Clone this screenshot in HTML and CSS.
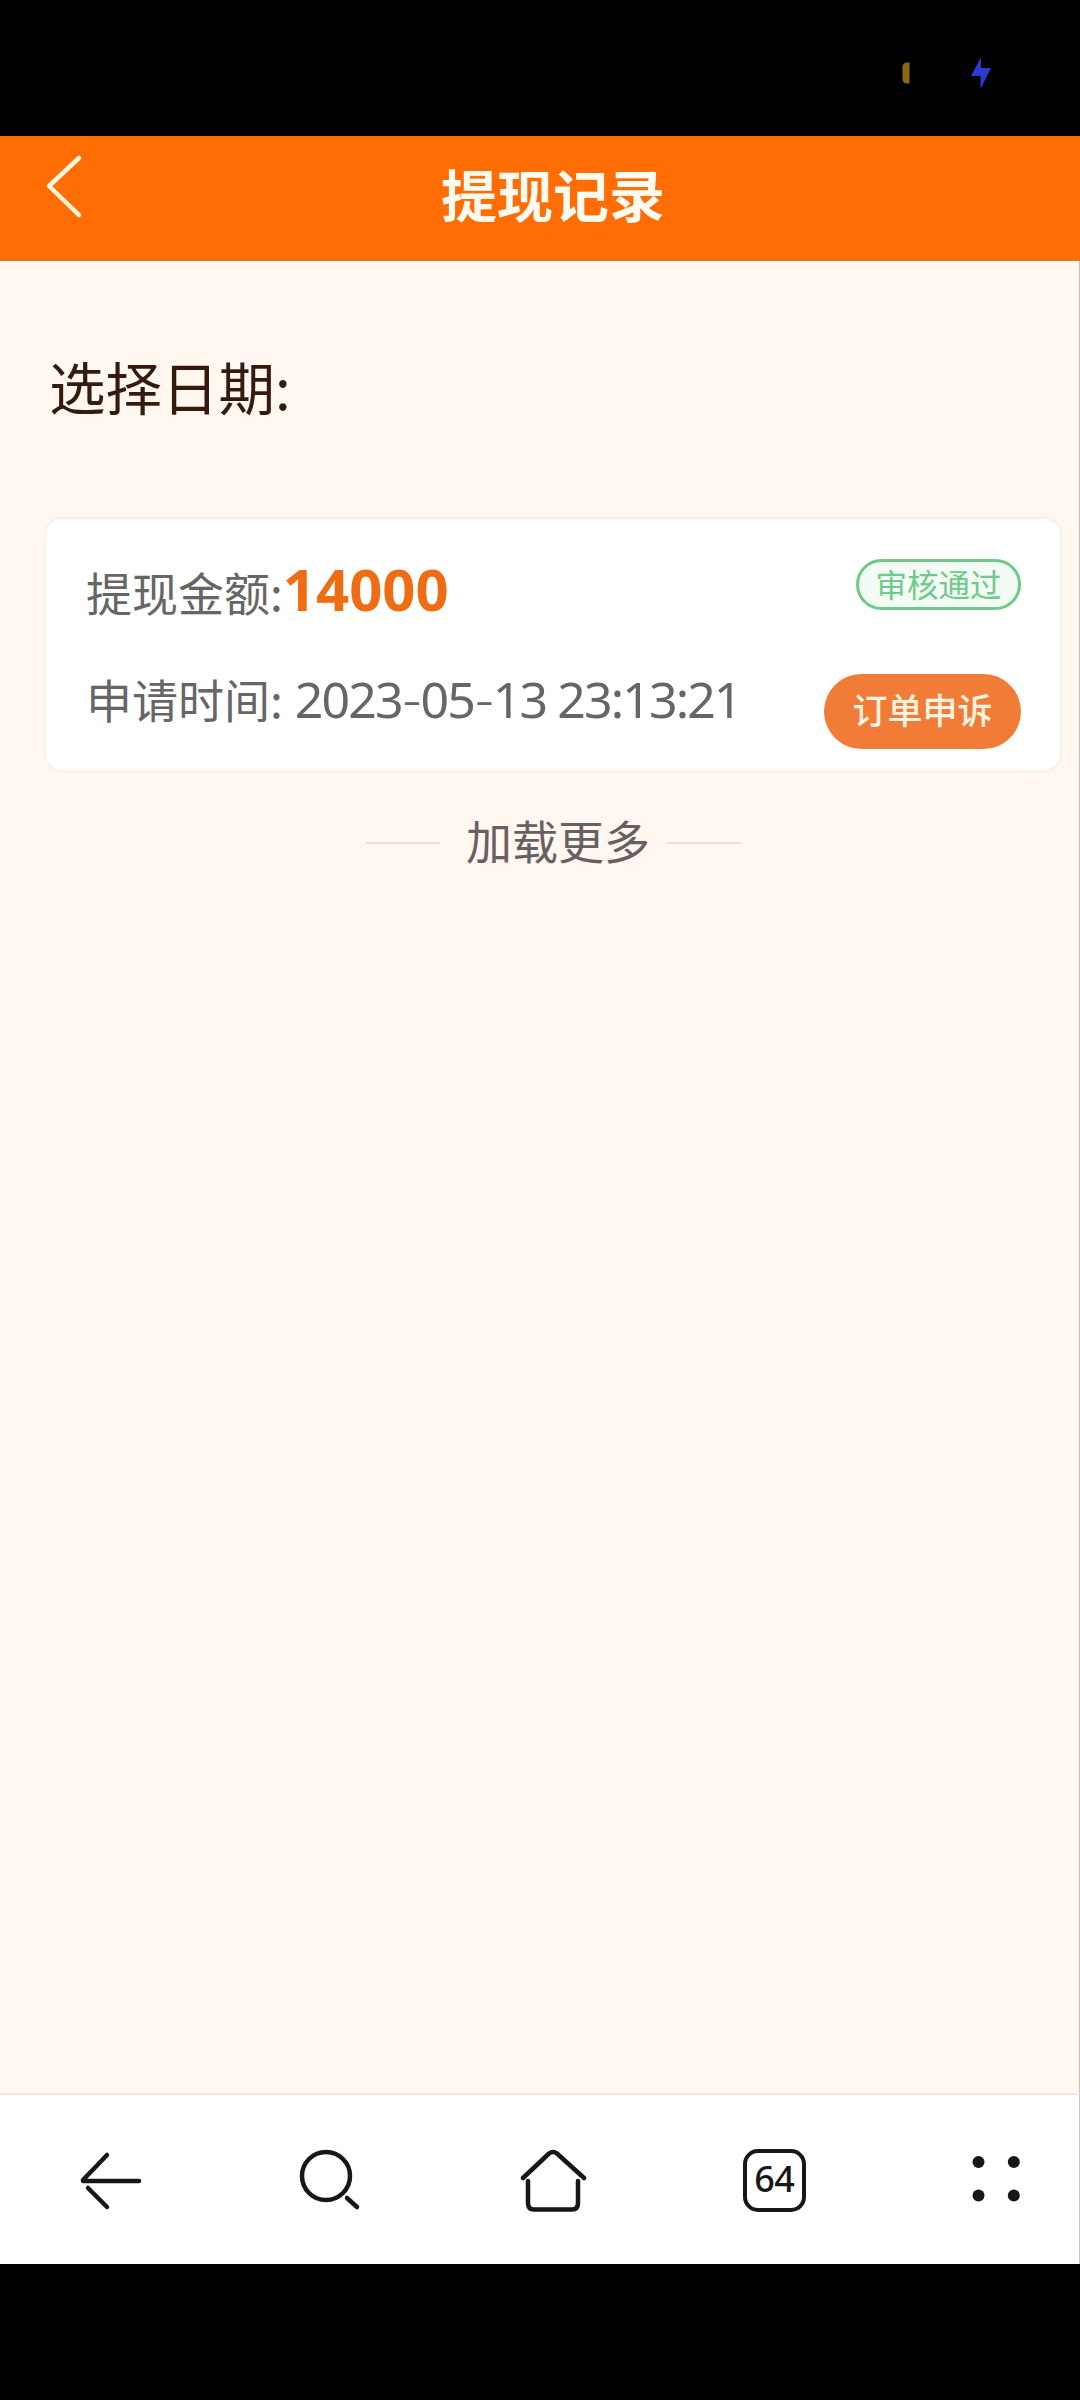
FILE: index.html
```html
<!DOCTYPE html>
<html lang="zh-CN">
<head>
<meta charset="utf-8">
<title>提现记录</title>
<link rel="stylesheet" href="styles.css">
</head>
<body>
<div class="screen">
  <div class="status">
    <svg class="battery" width="8" height="22" viewBox="0 0 8 22"><path d="M7.500 .5H4Q.5 1.500 .5 5V17Q.5 20.500 4 21.500H7.500Z" fill="#8b6914"/></svg>
    <svg class="bolt" width="20" height="32" viewBox="0 0 20 32"><path d="M10 0L0 19H9.500V32L20 11H10Z" fill="#2b3bd0"/></svg>
  </div>
  <header class="header">
    <svg class="back" width="40" height="66" viewBox="0 0 40 66"><path d="M35 5L5 33L35 62" fill="none" stroke="#fff6e0" stroke-width="4.500" stroke-linecap="round" stroke-linejoin="round"/></svg>
    <h1 class="title">提现记录</h1>
  </header>
  <main class="content">
    <div class="date-label">选择日期:</div>
    <section class="card">
      <div class="row">
        <div class="field">提现金额:<span class="amount">14000</span></div>
        <span class="badge">审核通过</span>
      </div>
      <div class="row row-time">
        <div class="field">申请时间:<span class="time">2023<span class="dash">-</span>05<span class="dash">-</span>13 23:13:21</span></div>
        <button class="appeal">订单申诉</button>
      </div>
    </section>
    <div class="more"><i class="rule"></i><span>加载更多</span><i class="rule"></i></div>
  </main>
  <nav class="nav">
    <svg width="64" height="64" viewBox="0 0 64 64" fill="none" stroke="#171717" stroke-width="4.500" stroke-linecap="round"><path d="M5 32H61M5 31L29 6M10 39L29 58"/></svg>
    <svg width="64" height="64" viewBox="0 0 64 64" fill="none" stroke="#171717" stroke-width="4.500" stroke-linecap="round"><circle cx="28" cy="27" r="24"/><path d="M49 49L59 58"/></svg>
    <svg width="68" height="64" viewBox="0 0 68 64" fill="none" stroke="#171717" stroke-width="4.500" stroke-linecap="round" stroke-linejoin="round"><path d="M4 29L30 4.500Q34 1.500 38 4.500L65 29M9 32V54Q9 60.500 15 60.500H53Q59 60.500 59 54V32"/></svg>
    <div class="tabs">64</div>
    <svg width="64" height="64" viewBox="0 0 64 64" fill="#171717"><circle cx="16.500" cy="13" r="6"/><circle cx="51.800" cy="13" r="6"/><circle cx="16.500" cy="46.500" r="6"/><circle cx="51.800" cy="46.500" r="6"/></svg>
  </nav>
</div>
</body>
</html>
```
FILE: styles.css
```css
* { box-sizing: border-box; }

body {
  margin: 0;
  background: #000;
  font-family: "Noto Sans CJK SC", sans-serif;
}

.screen {
  width: 1080px;
  height: 2400px;
  display: flex;
  flex-direction: column;
  background: #000;
}

.status {
  height: 136px;
  padding: 57px 89px 0 0;
  display: flex;
  justify-content: flex-end;
  gap: 61px;
}

.battery { margin-top: 5px; }

.header {
  height: 125px;
  display: grid;
  grid-template-columns: 90px 1fr 90px;
  background: #ff6d04;
  border-bottom: 1px solid #e07321;
}

.back { margin: 17px 0 0 44px; }

.title {
  margin: 0;
  padding: 17px 0 0 26px;
  text-align: center;
  font-size: 56px;
  line-height: 80px;
  font-weight: 700;
  color: #fffaf0;
}

.content {
  height: 1832px;
  padding: 84px 17px 0 44px;
  background: #fff7f0;
  border-right: 1px solid #c4c0bc;
}

.date-label {
  padding-left: 5px;
  font-size: 56.5px;
  line-height: 80px;
  color: #351a0e;
}

.card {
  height: 255px;
  margin-top: 92px;
  padding: 25px 39px 0 40px;
  background: #fff;
  border: 2px solid #f6f2ea;
  border-radius: 18px;
}

.row {
  height: 104px;
  display: flex;
  justify-content: space-between;
  align-items: flex-start;
}

.field {
  display: flex;
  align-items: baseline;
  font-size: 46px;
  line-height: 100px;
  color: #666;
  white-space: nowrap;
}

.row .field { margin-top: -3px; }
.row-time .field { margin-top: 0; }

.amount {
  font-family: "Noto Sans", sans-serif;
  font-size: 58px;
  line-height: 80px;
  font-weight: 700;
  color: #ee6d13;
}

.time {
  margin-left: 12px;
  font-family: "Noto Sans", sans-serif;
  font-size: 50px;
  line-height: 80px;
  letter-spacing: -1.9px;
}

.dash {
  font-family: Inter, sans-serif;
  font-size: 46px;
  font-weight: 300;
}

.badge {
  width: 165px;
  height: 51px;
  margin-top: 15px;
  border: 3px solid #6fca8a;
  border-radius: 26px;
  background: #f3fbf5;
  font-size: 31.5px;
  line-height: 42px;
  text-align: center;
  color: #6fca8a;
}

.appeal {
  width: 197px;
  height: 75px;
  margin-top: 26px;
  padding: 0 0 6px;
  border: 0;
  border-radius: 38px;
  background: #f07c38;
  font: 500 35px "Noto Sans CJK SC", sans-serif;
  color: #fff3e2;
}

.more {
  margin: 31px 0 0 322px;
  display: flex;
  align-items: center;
  height: 80px;
  font-size: 46px;
  line-height: 80px;
  color: #666060;
}

.more span { margin: -8px 17px 0 26px; }

.rule {
  width: 74px;
  height: 2px;
  background: #e9e2dc;
}

.nav {
  height: 171px;
  padding: 2px 53px 0 78px;
  display: flex;
  justify-content: space-between;
  align-items: center;
  background: #fff;
  border-top: 2px solid #eee9e6;
  border-right: 1px solid #c4c4c4;
}

.tabs {
  width: 63px;
  height: 63px;
  border: 4.5px solid #171717;
  border-radius: 15px;
  font: 500 36px/52px "Noto Sans", sans-serif;
  letter-spacing: -0.5px;
  text-align: center;
  color: #171717;
}
```
